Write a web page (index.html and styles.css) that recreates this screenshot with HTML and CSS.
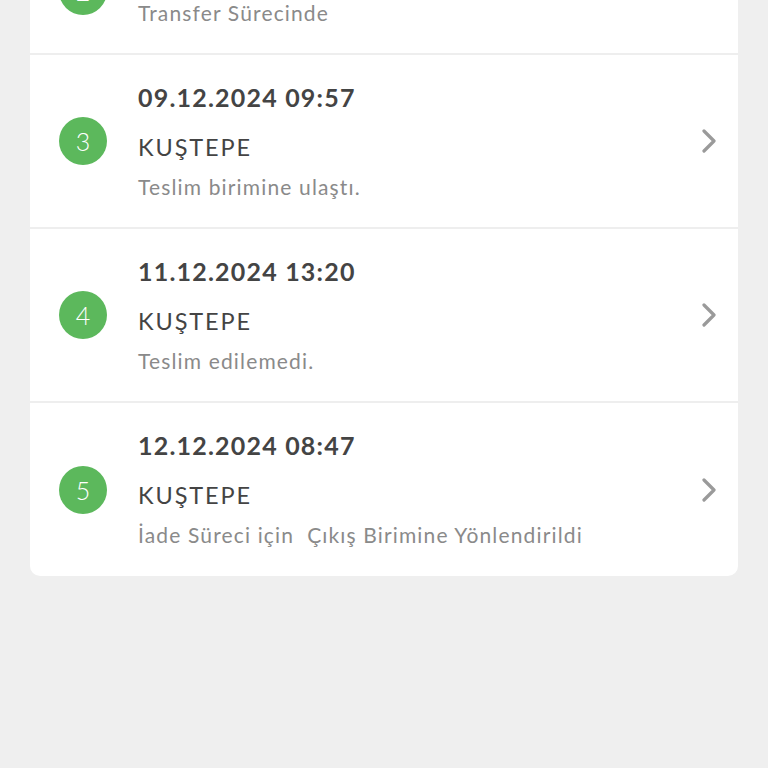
FILE: index.html
```html
<!DOCTYPE html>
<html lang="tr">
<head>
  <meta charset="UTF-8" />
  <meta name="viewport" content="width=device-width, initial-scale=1.0"/>
  <title>Gönderi Hareketleri</title>
  <link rel="stylesheet" href="styles.css">
</head>
<body>
  <main class="card">
    <div class="row row-tall">
      <div class="step">2</div>
      <div class="info">
        <p class="date">08.12.2024 21:14</p>
        <p class="place">İSTANBUL AVRUPA TRANSFER MERKEZİ</p>
        <p class="status">Transfer Sürecinde</p>
      </div>
      <span class="chevron"><svg width="14" height="24" viewBox="0 0 14 24"><path d="M2 2 L12 12 L2 22" fill="none" stroke="#9a9a9a" stroke-width="3.2" stroke-linecap="round" stroke-linejoin="round"/></svg></span>
    </div>

    <div class="row">
      <div class="step">3</div>
      <div class="info">
        <p class="date">09.12.2024 09:57</p>
        <p class="place">KUŞTEPE</p>
        <p class="status">Teslim birimine ulaştı.</p>
      </div>
      <span class="chevron"><svg width="14" height="24" viewBox="0 0 14 24"><path d="M2 2 L12 12 L2 22" fill="none" stroke="#9a9a9a" stroke-width="3.2" stroke-linecap="round" stroke-linejoin="round"/></svg></span>
    </div>

    <div class="row">
      <div class="step">4</div>
      <div class="info">
        <p class="date">11.12.2024 13:20</p>
        <p class="place">KUŞTEPE</p>
        <p class="status">Teslim edilemedi.</p>
      </div>
      <span class="chevron"><svg width="14" height="24" viewBox="0 0 14 24"><path d="M2 2 L12 12 L2 22" fill="none" stroke="#9a9a9a" stroke-width="3.2" stroke-linecap="round" stroke-linejoin="round"/></svg></span>
    </div>

    <div class="row row-last">
      <div class="step">5</div>
      <div class="info">
        <p class="date">12.12.2024 08:47</p>
        <p class="place">KUŞTEPE</p>
        <p class="status">İade Süreci için&nbsp; Çıkış Birimine Yönlendirildi</p>
      </div>
      <span class="chevron"><svg width="14" height="24" viewBox="0 0 14 24"><path d="M2 2 L12 12 L2 22" fill="none" stroke="#9a9a9a" stroke-width="3.2" stroke-linecap="round" stroke-linejoin="round"/></svg></span>
    </div>
  </main>
</body>
</html>
```
FILE: styles.css
```css
body, html {
  margin: 0;
  padding: 0;
  background-color: #efefef;
  font-family: Lato, "Open Sans", Arial, sans-serif;
}

.card {
  margin: -163px 30px 0 30px;
  background-color: white;
  border-radius: 0 0 10px 10px;
}

.row {
  display: flex;
  align-items: center;
  height: 174px;
  padding: 0 22px 0 29px;
  border-top: 2px solid #eeeeee;
  box-sizing: border-box;
}

.row:first-child {
  border-top: none;
}

/* the row above is only partly on screen */
.row-tall {
  height: 216px;
}

.row-tall .info {
  align-self: flex-end;
  margin-bottom: 27px;
}

.row-tall .step {
  align-self: flex-end;
  margin-bottom: 38px;
}

.row-last {
  height: 175px;
}

.step {
  width: 48px;
  height: 48px;
  border-radius: 50%;
  background-color: #5cb85c;
  color: white;
  font-size: 25px;
  font-weight: 300;
  display: flex;
  justify-content: center;
  align-items: center;
  flex-shrink: 0;
}

.info {
  flex: 1;
  margin-left: 31px;
}

.info p {
  margin: 0;
}

.date {
  font-size: 25px;
  font-weight: bold;
  line-height: 28px;
  letter-spacing: 1.2px;
  color: #444;
}

.place {
  font-size: 23.5px;
  line-height: 28px;
  letter-spacing: 1.9px;
  margin-top: 22px !important;
  color: #444;
}

.status {
  font-size: 21px;
  line-height: 26px;
  letter-spacing: 1.15px;
  margin-top: 13px !important;
  color: #8a8a8a;
}

.chevron {
  display: flex;
}
```
